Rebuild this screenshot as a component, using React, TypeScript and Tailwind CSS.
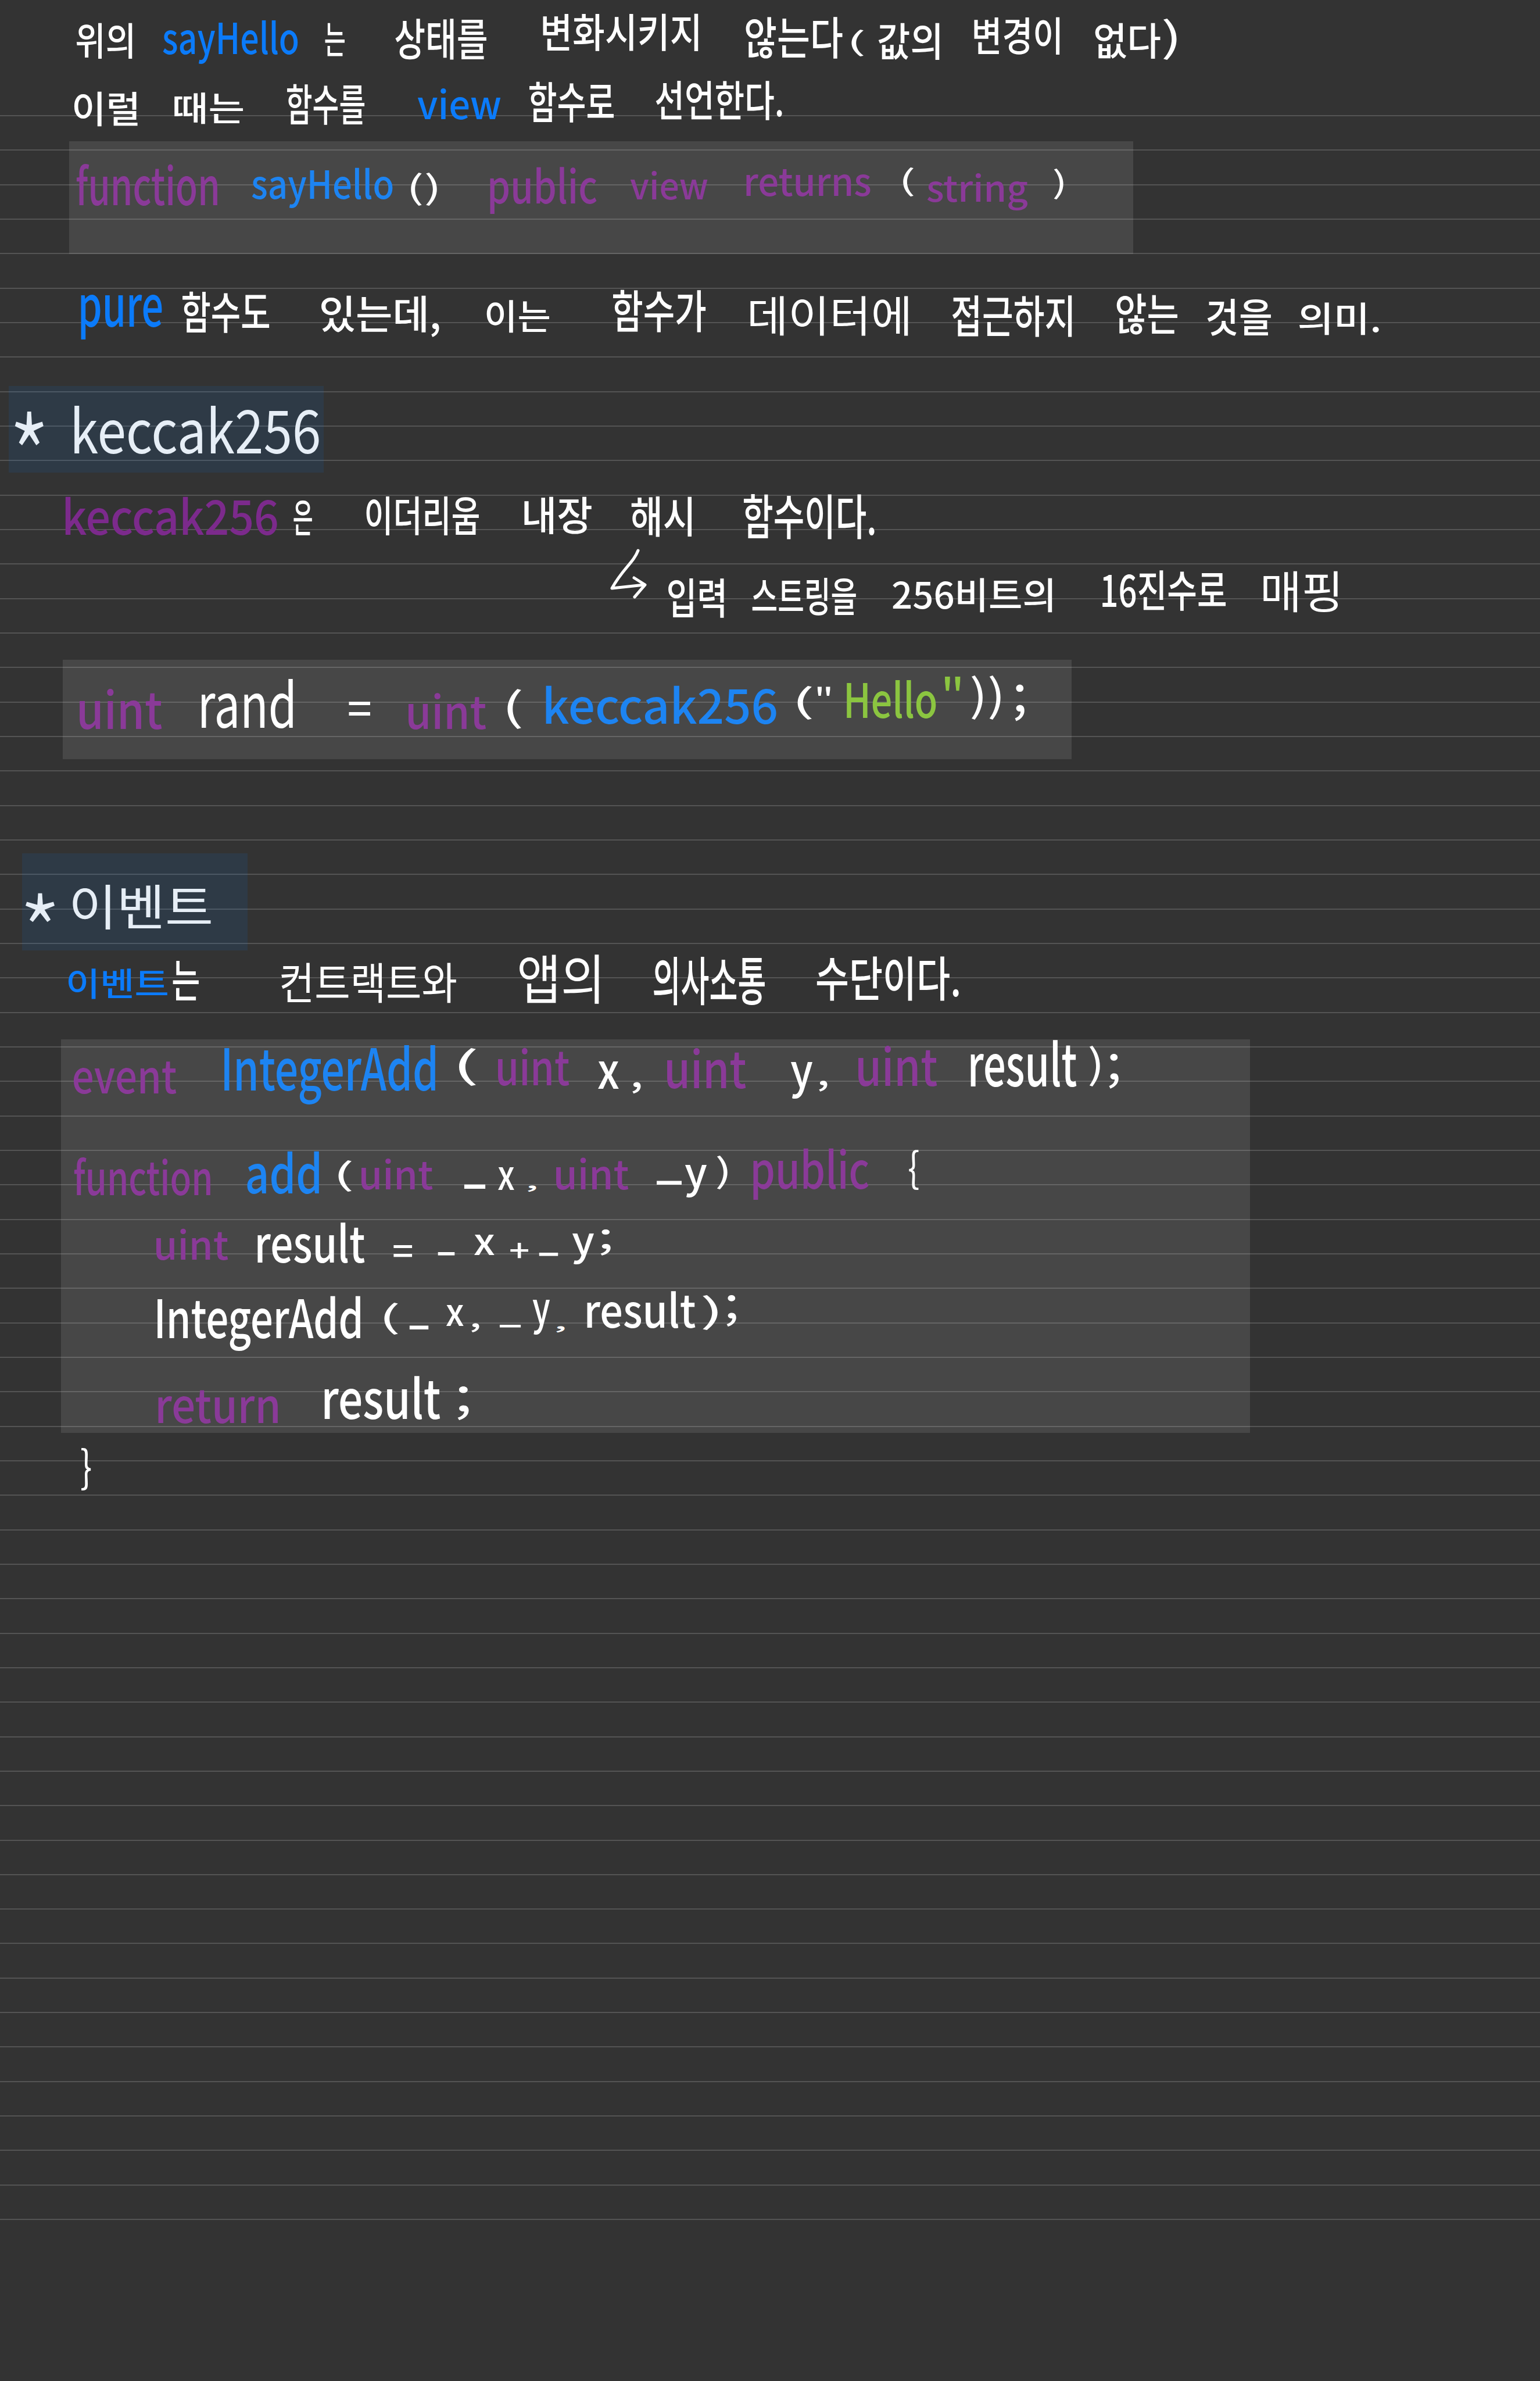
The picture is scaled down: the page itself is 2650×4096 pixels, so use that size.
import React, { useLayoutEffect, useRef } from "react";

const PURPLE = "text-[#8a3a98]";
const DARK_PURPLE = "text-[#7c2a8c]";
const BLUE = "text-[#1d84f2]";
const BRIGHT_BLUE = "text-[#0b7bfa]";
const GREEN = "text-[#8bc540]";
const PALE = "text-[#e6eef6]";

let measureCtx: CanvasRenderingContext2D | null = null;

// Stretches one handwritten word so its inked area fills the box it was given.
const Ink = ({ className, children }: { className: string; children: string }) => {
  const boxRef = useRef<HTMLDivElement>(null);
  const textRef = useRef<HTMLSpanElement>(null);

  useLayoutEffect(() => {
    const box = boxRef.current;
    const text = textRef.current;
    if (!box || !text) return;
    if (!measureCtx) measureCtx = document.createElement("canvas").getContext("2d");
    if (!measureCtx) return;
    const cs = getComputedStyle(text);
    measureCtx.font = `${cs.fontWeight} ${cs.fontSize} ${cs.fontFamily}`;
    const m = measureCtx.measureText(children);
    const inkW = m.actualBoundingBoxLeft + m.actualBoundingBoxRight;
    const inkH = m.actualBoundingBoxAscent + m.actualBoundingBoxDescent;
    const fs = parseFloat(cs.fontSize);
    const baseline =
      (fs - (m.fontBoundingBoxAscent + m.fontBoundingBoxDescent)) / 2 + m.fontBoundingBoxAscent;
    const sx = box.clientWidth / inkW;
    const sy = box.clientHeight / inkH;
    const tx = sx * m.actualBoundingBoxLeft;
    const ty = -sy * (baseline - m.actualBoundingBoxAscent);
    text.style.transform = `translate(${tx}px, ${ty}px) scale(${sx}, ${sy})`;
  }, [children]);

  return (
    <div ref={boxRef} className={`shrink-0 ${className}`}>
      <span ref={textRef} className="block w-max origin-top-left whitespace-nowrap text-[64px] leading-none">
        {children}
      </span>
    </div>
  );
};

const Arrow = () => (
  <svg className="ml-[1050px] h-[86px] w-[63px] shrink-0" viewBox="0 0 63 86" fill="none" stroke="#ffffff" strokeWidth="5" strokeLinecap="round" strokeLinejoin="round">
    <path d="M48 3 C40 24 22 34 3 68 L59 62" />
    <path d="M41 50 L60 62 L42 83" />
  </svg>
);

export default function App() {
  return (
    <div className="relative h-[4096px] w-[2650px] overflow-hidden bg-[#333333] font-['Noto_Sans_CJK_KR',sans-serif] font-medium text-white">
      <div className="absolute top-[198px] right-0 left-0 h-[3622px] bg-[repeating-linear-gradient(to_bottom,#545454_0,#545454_2px,transparent_2px,transparent_59.33px)]" />
      <div className="absolute top-[62px] left-[141px] h-[6px] w-[18px] bg-white/10" />
      <div className="relative flex flex-col pt-[20px]">
        <div className="flex h-[100px] items-start">
          <Ink className="mt-[19px] ml-[131px] h-[63px] w-[97px]">위의</Ink>
          <Ink className={`mt-[15px] ml-[52px] h-[75px] w-[233px] ${BRIGHT_BLUE}`}>sayHello</Ink>
          <Ink className="mt-[19px] ml-[46px] h-[58px] w-[34px]">는</Ink>
          <Ink className="mt-[11px] ml-[87px] h-[73px] w-[157px]">상태를</Ink>
          <Ink className="mt-[4px] ml-[97px] h-[66px] w-[268px]">변화시키지</Ink>
          <Ink className="mt-[8px] ml-[81px] h-[74px] w-[167px]">않는다</Ink>
          <Ink className="mt-[31px] ml-[14px] h-[46px] w-[22px] font-normal">(</Ink>
          <Ink className="mt-[19px] ml-[25px] h-[65px] w-[106px]">값의</Ink>
          <Ink className="mt-[10px] ml-[59px] h-[66px] w-[148px]">변경이</Ink>
          <Ink className="mt-[19px] ml-[60px] h-[63px] w-[113px]">없다</Ink>
          <Ink className="mt-[12px] ml-[4px] h-[71px] w-[24px] font-normal">)</Ink>
        </div>

        <div className="flex h-[123px] items-start">
          <Ink className="mt-[37px] ml-[127px] h-[61px] w-[110px]">이럴</Ink>
          <Ink className="mt-[39px] ml-[63px] h-[55px] w-[118px]">때는</Ink>
          <Ink className="mt-[25px] ml-[76px] h-[71px] w-[133px]">함수를</Ink>
          <Ink className={`mt-[33px] ml-[91px] h-[53px] w-[144px] ${BRIGHT_BLUE}`}>view</Ink>
          <Ink className="mt-[21px] ml-[49px] h-[71px] w-[145px]">함수로</Ink>
          <Ink className="mt-[19px] ml-[72px] h-[69px] w-[218px]">선언한다.</Ink>
        </div>

        <div className="ml-[119px] flex h-[194px] w-[1831px] items-start bg-white/10">
          <Ink className={`mt-[38px] ml-[12px] h-[73px] w-[243px] ${PURPLE}`}>function</Ink>
          <Ink className={`mt-[46px] ml-[59px] h-[69px] w-[243px] ${BLUE}`}>sayHello</Ink>
          <Ink className="mt-[54px] ml-[30px] h-[57px] w-[46px] font-normal">()</Ink>
          <Ink className={`mt-[44px] ml-[91px] h-[80px] w-[184px] ${PURPLE}`}>public</Ink>
          <Ink className={`mt-[52px] ml-[57px] h-[49px] w-[134px] ${PURPLE}`}>view</Ink>
          <Ink className={`mt-[48px] ml-[66px] h-[47px] w-[214px] ${PURPLE}`}>returns</Ink>
          <Ink className="mt-[45px] ml-[55px] h-[50px] w-[19px] font-normal">(</Ink>
          <Ink className={`mt-[56px] ml-[23px] h-[64px] w-[174px] ${PURPLE}`}>string</Ink>
          <Ink className="mt-[48px] ml-[44px] h-[53px] w-[17px] font-normal">)</Ink>
        </div>

        <div className="flex h-[227px] items-start">
          <Ink className={`mt-[70px] ml-[139px] h-[76px] w-[140px] ${BRIGHT_BLUE}`}>pure</Ink>
          <Ink className="mt-[64px] ml-[35px] h-[73px] w-[149px]">함수도</Ink>
          <Ink className="mt-[72px] ml-[90px] h-[71px] w-[203px]">있는데,</Ink>
          <Ink className="mt-[80px] ml-[81px] h-[57px] w-[108px]">이는</Ink>
          <Ink className="mt-[62px] ml-[110px] h-[75px] w-[160px]">함수가</Ink>
          <Ink className="mt-[72px] ml-[76px] h-[69px] w-[272px] font-normal">데이터에</Ink>
          <Ink className="mt-[70px] ml-[75px] h-[74px] w-[207px]">접근하지</Ink>
          <Ink className="mt-[68px] ml-[76px] h-[71px] w-[105px]">않는</Ink>
          <Ink className="mt-[76px] ml-[51px] h-[65px] w-[110px]">것을</Ink>
          <Ink className="mt-[84px] ml-[49px] h-[57px] w-[137px]">의미.</Ink>
        </div>

        <div className={`ml-[15px] flex h-[149px] w-[542px] items-start bg-[#0b7bfa]/10 ${PALE}`}>
          <Ink className="mt-[42px] ml-[9px] h-[60px] w-[52px] font-light">*</Ink>
          <Ink className="mt-[33px] ml-[51px] h-[85px] w-[422px] font-normal">keccak256</Ink>
        </div>

        <div className="flex h-[131px] items-start">
          <Ink className={`mt-[41px] ml-[112px] h-[67px] w-[365px] ${DARK_PURPLE}`}>keccak256</Ink>
          <Ink className="mt-[47px] ml-[28px] h-[61px] w-[32px]">은</Ink>
          <Ink className="mt-[41px] ml-[93px] h-[68px] w-[194px]">이더리움</Ink>
          <Ink className="mt-[42px] ml-[78px] h-[66px] w-[116px]">내장</Ink>
          <Ink className="mt-[41px] ml-[68px] h-[71px] w-[105px]">해시</Ink>
          <Ink className="mt-[37px] ml-[89px] h-[79px] w-[225px]">함수이다.</Ink>
        </div>

        <div className="flex h-[191px] items-start">
          <Arrow />
          <Ink className="mt-[51px] ml-[37px] h-[69px] w-[96px]">입력</Ink>
          <Ink className="mt-[50px] ml-[48px] h-[66px] w-[179px]">스트링을</Ink>
          <Ink className="mt-[50px] ml-[63px] h-[60px] w-[275px]">256비트의</Ink>
          <Ink className="mt-[37px] ml-[86px] h-[71px] w-[212px]">16진수로</Ink>
          <Ink className="mt-[38px] ml-[65px] h-[72px] w-[128px] font-normal">매핑</Ink>
        </div>

        <div className="ml-[108px] flex h-[171px] w-[1736px] items-start bg-white/10">
          <Ink className={`mt-[51px] ml-[29px] h-[69px] w-[142px] ${PURPLE}`}>uint</Ink>
          <Ink className="mt-[32px] ml-[67px] h-[87px] w-[158px] font-normal">rand</Ink>
          <Ink className="mt-[72px] ml-[96px] h-[24px] w-[38px]">=</Ink>
          <Ink className={`mt-[58px] ml-[65px] h-[62px] w-[134px] ${PURPLE}`}>uint</Ink>
          <Ink className="mt-[51px] ml-[35px] h-[69px] w-[25px] font-normal">(</Ink>
          <Ink className={`mt-[44px] ml-[42px] h-[67px] w-[397px] ${BLUE}`}>keccak256</Ink>
          <Ink className="mt-[46px] ml-[35px] h-[58px] w-[26px] font-normal">(</Ink>
          <Ink className="mt-[46px] ml-[9px] h-[16px] w-[23px] font-normal">"</Ink>
          <Ink className={`mt-[35px] ml-[28px] h-[66px] w-[154px] ${GREEN}`}>Hello</Ink>
          <Ink className={`mt-[28px] ml-[14px] h-[25px] w-[28px] font-normal ${GREEN}`}>"</Ink>
          <Ink className="mt-[27px] ml-[18px] h-[76px] w-[51px] font-normal">))</Ink>
          <Ink className="mt-[43px] ml-[24px] h-[64px] w-[18px] font-normal">;</Ink>
        </div>

        <div className={`mt-[162px] ml-[38px] flex h-[167px] w-[388px] items-start bg-[#0b7bfa]/10 ${PALE}`}>
          <Ink className="mt-[67px] ml-[4px] h-[51px] w-[53px] font-light">*</Ink>
          <Ink className="mt-[53px] ml-[30px] h-[79px] w-[238px] font-normal">이벤트</Ink>
        </div>

        <div className="flex h-[153px] items-start">
          <Ink className={`mt-[31px] ml-[117px] h-[53px] w-[171px] ${BRIGHT_BLUE}`}>이벤트</Ink>
          <Ink className="mt-[17px] ml-[9px] h-[70px] w-[45px]">는</Ink>
          <Ink className="mt-[21px] ml-[142px] h-[70px] w-[301px] font-normal">컨트랙트와</Ink>
          <Ink className="mt-[7px] ml-[108px] h-[86px] w-[138px] font-normal">앱의</Ink>
          <Ink className="mt-[10px] ml-[94px] h-[86px] w-[191px]">의사소통</Ink>
          <Ink className="mt-[10px] ml-[89px] h-[78px] w-[245px]">수단이다.</Ink>
        </div>

        <div className="ml-[105px] flex h-[677px] w-[2046px] flex-col bg-white/10">
          <div className="flex h-[180px] items-start">
            <Ink className={`mt-[38px] ml-[22px] h-[56px] w-[177px] ${PURPLE}`}>event</Ink>
            <Ink className={`mt-[10px] ml-[82px] h-[103px] w-[363px] ${BLUE}`}>IntegerAdd</Ink>
            <Ink className="mt-[15px] ml-[39px] h-[65px] w-[31px] font-normal">(</Ink>
            <Ink className={`mt-[15px] ml-[38px] h-[65px] w-[123px] ${PURPLE}`}>uint</Ink>
            <Ink className="mt-[38px] ml-[49px] h-[47px] w-[36px]">x</Ink>
            <Ink className="mt-[73px] ml-[23px] h-[20px] w-[15px]">,</Ink>
            <Ink className={`mt-[16px] ml-[45px] h-[69px] w-[136px] ${PURPLE}`}>uint</Ink>
            <Ink className="mt-[39px] ml-[76px] h-[63px] w-[38px]">y</Ink>
            <Ink className="mt-[71px] ml-[11px] h-[19px] w-[15px]">,</Ink>
            <Ink className={`mt-[11px] ml-[53px] h-[70px] w-[136px] ${PURPLE}`}>uint</Ink>
            <Ink className="mt-[2px] ml-[57px] h-[81px] w-[183px]">result</Ink>
            <Ink className="mt-[11px] ml-[21px] h-[70px] w-[19px] font-normal">)</Ink>
            <Ink className="mt-[25px] ml-[15px] h-[61px] w-[18px] font-normal">;</Ink>
          </div>
          <div className="flex h-[130px] items-start">
            <Ink className={`mt-[23px] ml-[22px] h-[66px] w-[235px] ${PURPLE}`}>function</Ink>
            <Ink className={`mt-[12px] ml-[63px] h-[74px] w-[124px] ${BLUE}`}>add</Ink>
            <Ink className="mt-[29px] ml-[32px] h-[54px] w-[24px] font-normal">(</Ink>
            <Ink className={`mt-[26px] ml-[17px] h-[53px] w-[123px] ${PURPLE}`}>uint</Ink>
            <Ink className="mt-[70px] ml-[53px] h-[8px] w-[38px]">_</Ink>
            <Ink className="mt-[40px] ml-[21px] h-[39px] w-[28px]">x</Ink>
            <Ink className="mt-[71px] ml-[23px] h-[11px] w-[15px]">,</Ink>
            <Ink className={`mt-[24px] ml-[34px] h-[55px] w-[125px] ${PURPLE}`}>uint</Ink>
            <Ink className="mt-[64px] ml-[47px] h-[7px] w-[45px]">_</Ink>
            <Ink className="mt-[36px] ml-[4px] h-[56px] w-[38px]">y</Ink>
            <Ink className="mt-[21px] ml-[17px] h-[58px] w-[19px] font-normal">)</Ink>
            <Ink className={`mt-[8px] ml-[44px] h-[88px] w-[199px] ${PURPLE}`}>public</Ink>
            <Ink className="mt-[10px] ml-[69px] h-[69px] w-[17px] font-normal">{"{"}</Ink>
          </div>
          <div className="flex h-[120px] items-start">
            <Ink className={`mt-[16px] ml-[164px] h-[54px] w-[124px] ${PURPLE}`}>uint</Ink>
            <Ink className="mt-[5px] ml-[50px] h-[70px] w-[185px]">result</Ink>
            <Ink className="mt-[44px] ml-[49px] h-[21px] w-[33px]">=</Ink>
            <Ink className="mt-[56px] ml-[43px] h-[6px] w-[30px]">_</Ink>
            <Ink className="mt-[26px] ml-[33px] h-[35px] w-[35px]">x</Ink>
            <Ink className="mt-[39px] ml-[27px] h-[27px] w-[32px]">+</Ink>
            <Ink className="mt-[57px] ml-[17px] h-[6px] w-[34px]">_</Ink>
            <Ink className="mt-[24px] ml-[23px] h-[53px] w-[38px]">y</Ink>
            <Ink className="mt-[17px] ml-[11px] h-[46px] w-[19px] font-normal">;</Ink>
          </div>
          <div className="flex h-[140px] items-start">
            <Ink className="mt-[12px] ml-[166px] h-[95px] w-[349px]">IntegerAdd</Ink>
            <Ink className="mt-[23px] ml-[40px] h-[55px] w-[25px] font-normal">(</Ink>
            <Ink className="mt-[63px] ml-[19px] h-[7px] w-[34px]">_</Ink>
            <Ink className="mt-[27px] ml-[30px] h-[36px] w-[30px]">x</Ink>
            <Ink className="mt-[58px] ml-[13px] h-[16px] w-[14px]">,</Ink>
            <Ink className="mt-[61px] ml-[34px] h-[5px] w-[38px]">_</Ink>
            <Ink className="mt-[19px] ml-[19px] h-[59px] w-[30px]">y</Ink>
            <Ink className="mt-[63px] ml-[11px] h-[11px] w-[15px]">,</Ink>
            <Ink className="mt-[3px] ml-[38px] h-[64px] w-[187px]">result</Ink>
            <Ink className="mt-[10px] ml-[11px] h-[60px] w-[27px] font-normal">)</Ink>
            <Ink className="mt-[10px] ml-[15px] h-[55px] w-[18px] font-normal">;</Ink>
          </div>
          <div className="flex h-[107px] items-start">
            <Ink className={`mt-[33px] ml-[167px] h-[58px] w-[206px] ${PURPLE}`}>return</Ink>
            <Ink className="mt-[9px] ml-[80px] h-[75px] w-[200px]">result</Ink>
            <Ink className="mt-[27px] ml-[29px] h-[59px] w-[21px] font-normal">;</Ink>
          </div>
        </div>

        <div className="flex items-start">
          <Ink className="mt-[26px] ml-[140px] h-[73px] w-[17px] font-normal">{"}"}</Ink>
        </div>
      </div>
    </div>
  );
}
